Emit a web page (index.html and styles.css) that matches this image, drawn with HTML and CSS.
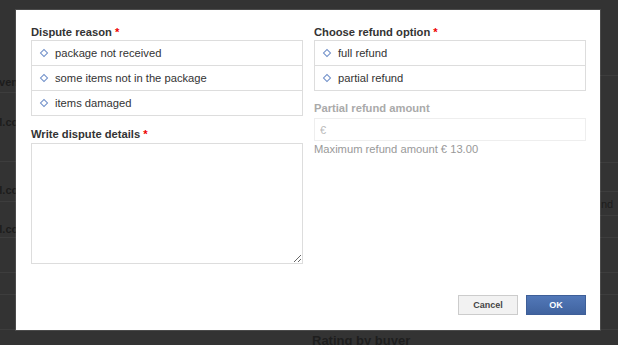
FILE: index.html
```html
<!DOCTYPE html>
<html>
	<head>
		<meta charset="UTF-8">
		<title>Dispute</title>
		<link rel="stylesheet" href="styles.css">
	</head>
	<body>
		<div class="page">
			<div class="side left">
				<div class="row r1"><span>even</span></div>
				<div class="row r2"><span>l.com</span></div>
				<div class="row r3"><span>l.com</span></div>
				<div class="row r4"><span>l.com</span></div>
				<div class="row r5"></div>
				<div class="row r6"></div>
				<div class="row r7"></div>
			</div>
			<div class="middle">
				<div class="rating">Rating by buyer</div>
			</div>
			<div class="side right">
				<div class="row q1"></div>
				<div class="row q2"></div>
				<div class="row q3"></div>
				<div class="row q4"><span>nd</span></div>
				<div class="row q5"></div>
				<div class="row q6"></div>
				<div class="row q7"></div>
				<div class="row q8"></div>
			</div>
		</div>

		<div class="modal">
			<div class="cols">
				<div class="col">
					<div class="label">Dispute reason <em>*</em></div>
					<ul class="options">
						<li><i class="dia"></i>package not received</li>
						<li><i class="dia"></i>some items not in the package</li>
						<li><i class="dia"></i>items damaged</li>
					</ul>
					<div class="label second">Write dispute details <em>*</em></div>
					<textarea class="details"></textarea>
				</div>
				<div class="col">
					<div class="label">Choose refund option <em>*</em></div>
					<ul class="options">
						<li><i class="dia"></i>full refund</li>
						<li><i class="dia"></i>partial refund</li>
					</ul>
					<div class="label muted">Partial refund amount</div>
					<input class="amount" type="text" placeholder="€" disabled>
					<div class="hint">Maximum refund amount € 13.00</div>
				</div>
			</div>
			<div class="actions">
				<a href="javascript:;" class="btn cancel">Cancel</a>
				<a href="javascript:;" class="btn ok">OK</a>
			</div>
		</div>
	</body>
</html>
```

FILE: styles.css
```css
*{
	margin:0px;
	padding:0px;
	box-sizing:border-box;
}
html,body{
	width:618px;
	height:345px;
	overflow:hidden;
}
body{
	background:#333;
	font-family:"Liberation Sans",Arial,sans-serif;
	color:#333;
	position:relative;
}

/* dimmed page behind the dialog */
.page{
	display:flex;
	height:345px;
	color:#1c1c1c;
	font-weight:bold;
	font-size:11px;
}
.side{
	display:flex;
	flex-direction:column;
	overflow:hidden;
}
.left{width:16px;}
.right{width:18px;}
.middle{
	flex:1;
	display:flex;
	flex-direction:column;
	justify-content:flex-end;
}
.row{
	flex:none;
	border-bottom:1px solid #3d3d3d;
	display:flex;
	align-items:flex-end;
	white-space:nowrap;
	line-height:13px;
}
.left .row{justify-content:flex-end;}
.left .row span{margin-right:-12px;}
.right .row span{margin-left:1px;font-weight:normal;}
.r1{height:93px;padding-bottom:3px;}
.r1 span{margin-right:-2px !important;}
.r2{height:69px;padding-bottom:32px;}
.r3{height:40px;padding-bottom:4px;}
.r4{height:36px;padding-bottom:1px;}
.r5{height:35px;}
.r6{height:22px;}
.r7{height:35px;}
.q1{height:76px;}
.q2{height:87px;}
.q3{height:29px;}
.q4{height:24px;padding-bottom:4px;}
.q5{height:22px;}
.q6{height:35px;}
.q7{height:22px;}
.q8{height:35px;}
.rating{
	height:15px;
	padding-left:296px;
	line-height:22px;
	font-size:13px;
	overflow:hidden;
	color:#1e1e1e;
}

/* dialog */
.modal{
	position:absolute;
	top:10px;
	left:16px;
	width:584px;
	height:320px;
	background:#fff;
	box-shadow:0 0 0 1px rgba(255,255,255,0.12);
	padding:14px 14px 15px 15px;
	display:flex;
	flex-direction:column;
	justify-content:space-between;
}
.cols{
	display:grid;
	grid-template-columns:272px 272px;
	column-gap:11px;
}
.col{
	display:flex;
	flex-direction:column;
}
.label{
	font-size:11.2px;
	font-weight:bold;
	line-height:16px;
	color:#333;
}
.label em{
	font-style:normal;
	color:#e00;
}
.label.second{margin-top:10px;margin-bottom:1px;}
.label.muted{
	color:#aaa;
	margin-top:9px;
	margin-bottom:2px;
}
.options{
	list-style:none;
	border:1px solid #ddd;
}
.options li{
	height:25px;
	border-top:1px solid #ddd;
	display:flex;
	align-items:center;
	padding-left:9px;
	font-size:11.2px;
	color:#333;
}
.options li:first-child{
	border-top:none;
	height:24px;
}
.dia{
	display:inline-block;
	width:6px;
	height:6px;
	border:1px solid #6f8fc9;
	transform:rotate(45deg);
	margin-right:8px;
}
.details{
	height:121px;
	border:1px solid #ddd;
	resize:vertical;
	outline:none;
}
.amount{
	height:23px;
	border:1px solid #eee;
	background:#fff;
	padding-left:5px;
	font-family:"Liberation Sans",Arial,sans-serif;
	font-size:11px;
}
.amount::placeholder{color:#bbb;}
.hint{
	font-size:11.2px;
	color:#999;
	line-height:14px;
	margin-top:1px;
}
.actions{
	display:flex;
	justify-content:flex-end;
	gap:8px;
}
.btn{
	display:inline-block;
	width:60px;
	height:20px;
	line-height:18px;
	text-align:center;
	text-decoration:none;
	font-size:9px;
	font-weight:bold;
	border:1px solid #ccc;
}
.cancel{
	background:#f2f2f2;
	color:#444;
}
.ok{
	background:linear-gradient(#5278b8,#40639f);
	border-color:#3e5f98;
	color:#fff;
}
```
